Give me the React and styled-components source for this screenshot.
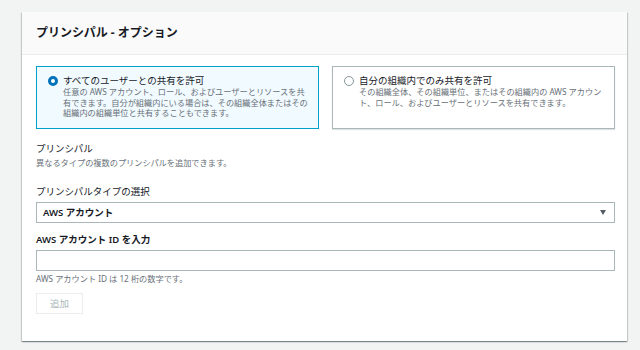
import React from "react";
import styled, { createGlobalStyle } from "styled-components";

const Global = createGlobalStyle`
  html, body { margin: 0; padding: 0; background: #f2f3f3; }
  body {
    font-family: "Noto Sans", "Noto Sans CJK JP", sans-serif;
    color: #16191f;
    -webkit-font-smoothing: antialiased;
  }
  * { box-sizing: border-box; }
`;

const Page = styled.div`
  width: 640px;
  height: 350px;
  padding: 12px 13px 0 22px;
  overflow: hidden;
`;

const Card = styled.section`
  background: #fff;
  box-shadow: 0 1px 1px 0 rgba(0, 28, 36, 0.3), 1px 1px 1px 0 rgba(0, 28, 36, 0.15),
    -1px 1px 1px 0 rgba(0, 28, 36, 0.15);
`;

const Header = styled.header`
  height: 43px;
  display: flex;
  align-items: center;
  padding: 0 14px;
  background: #fafafa;
  border-bottom: 1px solid #eaeded;
`;

const Title = styled.h2`
  margin: 0;
  font-size: 12px;
  font-weight: 700;
  line-height: 16px;
  color: #16191f;
`;

const Body = styled.div`
  display: flex;
  flex-direction: column;
  padding: 11px 12px 27px 14px;
`;

const Tiles = styled.div`
  display: grid;
  grid-template-columns: 1fr 1fr;
  gap: 13px;
`;

const Tile = styled.label`
  display: flex;
  gap: 5px;
  padding: 7px 10px 9px 11px;
  border: 1px solid ${(p) => (p.$selected ? "#00a1c9" : "#aab7b8")};
  background: ${(p) => (p.$selected ? "#f1faff" : "#fff")};
  box-shadow: ${(p) => (p.$selected ? "none" : "0 1px 1px 0 rgba(0,28,36,0.12)")};
`;

const Radio = styled.span`
  flex: none;
  width: 10px;
  height: 10px;
  margin-top: 1.5px;
  border-radius: 50%;
  background: #fff;
  border: ${(p) => (p.$checked ? "3px solid #0073bb" : "1px solid #879596")};
`;

const TileText = styled.div`
  display: flex;
  flex-direction: column;
`;

const TileTitle = styled.span`
  font-size: 9.5px;
  line-height: 13px;
  color: #16191f;
`;

const Desc = styled.span`
  font-size: 8.2px;
  line-height: ${(p) => p.$lh || "10.5px"};
  color: #687078;
  margin-top: ${(p) => p.$mt || "0"};
  white-space: nowrap;
`;

const Label = styled.span`
  font-size: 9.5px;
  line-height: 13px;
  font-weight: ${(p) => (p.$strong ? 600 : 400)};
  color: #16191f;
  margin-top: ${(p) => p.$mt || "0"};
`;

const Select = styled.div`
  margin-top: 3.5px;
  height: 21px;
  display: flex;
  align-items: center;
  justify-content: space-between;
  padding: 0 8px 0 6px;
  border: 1px solid #aab7b8;
  background: #fff;
  font-size: 9.5px;
  font-weight: 600;
`;

const Arrow = styled.span`
  width: 0;
  height: 0;
  border-left: 3.5px solid transparent;
  border-right: 3.5px solid transparent;
  border-top: 5px solid #545b64;
`;

const Input = styled.div`
  margin-top: 3.5px;
  height: 21px;
  border: 1px solid #aab7b8;
  background: #fff;
`;

const Button = styled.button`
  margin-top: 8.5px;
  align-self: flex-start;
  width: 47px;
  height: 21px;
  border: 1px solid #eaeded;
  background: #fff;
  color: #aab7b8;
  font-family: inherit;
  font-size: 9.5px;
  padding: 0;
`;

export default function App() {
  return (
    <>
      <Global />
      <Page>
        <Card>
          <Header>
            <Title>プリンシパル - オプション</Title>
          </Header>
          <Body>
            <Tiles>
              <Tile $selected>
                <Radio $checked />
                <TileText>
                  <TileTitle>すべてのユーザーとの共有を許可</TileTitle>
                  <Desc>
                    任意の AWS アカウント、ロール、およびユーザーとリソースを共
                    <br />
                    有できます。自分が組織内にいる場合は、その組織全体またはその
                    <br />
                    組織内の組織単位と共有することもできます。
                  </Desc>
                </TileText>
              </Tile>
              <Tile>
                <Radio />
                <TileText>
                  <TileTitle>自分の組織内でのみ共有を許可</TileTitle>
                  <Desc>
                    その組織全体、その組織単位、またはその組織内の AWS アカウン
                    <br />
                    ト、ロール、およびユーザーとリソースを共有できます。
                  </Desc>
                </TileText>
              </Tile>
            </Tiles>
            <Label $mt="13.5px">プリンシパル</Label>
            <Desc $lh="11px" $mt="2px">
              異なるタイプの複数のプリンシパルを追加できます。
            </Desc>
            <Label $mt="17px">プリンシパルタイプの選択</Label>
            <Select>
              <span>AWS アカウント</span>
              <Arrow />
            </Select>
            <Label $mt="10.5px" $strong>
              AWS アカウント ID を入力
            </Label>
            <Input />
            <Desc $lh="11px" $mt="2.5px">
              AWS アカウント ID は 12 桁の数字です。
            </Desc>
            <Button disabled>追加</Button>
          </Body>
        </Card>
      </Page>
    </>
  );
}
